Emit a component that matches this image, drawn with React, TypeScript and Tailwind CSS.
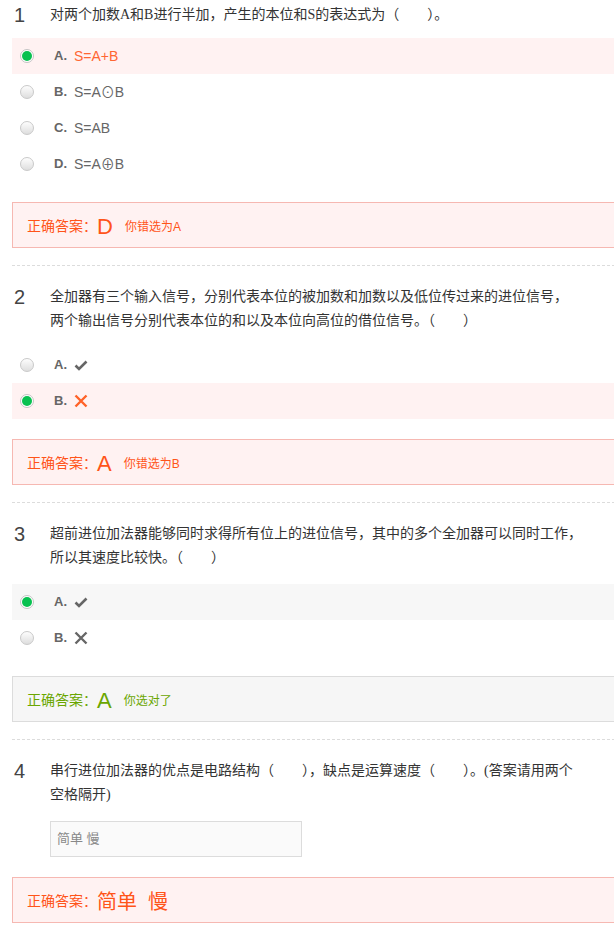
import React from "react";

type Option = {
  key: string;
  text?: string;
  icon?: "check" | "cross";
  selected?: boolean;
};

type Question = {
  no: number;
  lines: string[];
  options?: Option[];
  input?: string;
  answer: string;
  note?: string;
  correct: boolean;
  first?: boolean;
};

const questions: Question[] = [
  {
    no: 1,
    first: true,
    lines: ["对两个加数A和B进行半加，产生的本位和S的表达式为（　　）。"],
    options: [
      { key: "A", text: "S=A+B", selected: true },
      { key: "B", text: "S=A⊙B" },
      { key: "C", text: "S=AB" },
      { key: "D", text: "S=A⊕B" },
    ],
    answer: "D",
    note: "你错选为A",
    correct: false,
  },
  {
    no: 2,
    lines: [
      "全加器有三个输入信号，分别代表本位的被加数和加数以及低位传过来的进位信号，",
      "两个输出信号分别代表本位的和以及本位向高位的借位信号。（　　）",
    ],
    options: [
      { key: "A", icon: "check" },
      { key: "B", icon: "cross", selected: true },
    ],
    answer: "A",
    note: "你错选为B",
    correct: false,
  },
  {
    no: 3,
    lines: [
      "超前进位加法器能够同时求得所有位上的进位信号，其中的多个全加器可以同时工作，",
      "所以其速度比较快。（　　）",
    ],
    options: [
      { key: "A", icon: "check", selected: true },
      { key: "B", icon: "cross" },
    ],
    answer: "A",
    note: "你选对了",
    correct: true,
  },
  {
    no: 4,
    lines: [
      "串行进位加法器的优点是电路结构（　　），缺点是运算速度（　　）。(答案请用两个",
      "空格隔开)",
    ],
    input: "简单 慢",
    answer: "简单  慢",
    correct: false,
  },
];

function Radio({ checked }: { checked?: boolean }) {
  if (checked) {
    return (
      <span className="flex h-[14px] w-[14px] items-center justify-center rounded-full border border-[#c4c4c4] bg-white">
        <span className="h-[10px] w-[10px] rounded-full bg-[#08c150]" />
      </span>
    );
  }
  return (
    <span className="h-[14px] w-[14px] rounded-full border border-[#c9c9c9] bg-gradient-to-b from-[#fdfdfd] to-[#dedede]" />
  );
}

function CheckIcon() {
  return (
    <svg width="14" height="11" viewBox="0 0 14 11" className="text-[#666]">
      <path d="M1.5 5.5 L5 9 L12.5 1.5" fill="none" stroke="currentColor" strokeWidth="2.6" />
    </svg>
  );
}

function CrossIcon({ color }: { color: string }) {
  return (
    <svg width="14" height="14" viewBox="0 0 14 14" style={{ color }}>
      <path d="M1.5 1.5 L12.5 12.5 M12.5 1.5 L1.5 12.5" fill="none" stroke="currentColor" strokeWidth="2.4" />
    </svg>
  );
}

function OptionRow({ opt, correct }: { opt: Option; correct: boolean }) {
  const band = opt.selected ? (correct ? "bg-[#f7f7f7]" : "bg-[#fff2f2]") : "";
  const wrong = opt.selected && !correct;
  return (
    <div className={`flex h-[36px] items-center ${band}`}>
      <span className="ml-[8px] flex w-[34px]">
        <Radio checked={opt.selected} />
      </span>
      <span className="w-[20px] text-[13px] font-bold text-[#666]">{opt.key}.</span>
      {opt.text && (
        <span className={`text-[14px] ${wrong ? "text-[#ff6633]" : "text-[#666]"}`}>{opt.text}</span>
      )}
      {opt.icon === "check" && <CheckIcon />}
      {opt.icon === "cross" && <CrossIcon color={wrong ? "#ff6228" : "#666"} />}
    </div>
  );
}

function AnswerBox({ q }: { q: Question }) {
  const box = q.correct
    ? "border-[#dcdcdc] bg-[#f6f6f6] text-[#6aa600]"
    : "border-[#f6b8b2] bg-[#fff2f2] text-[#ff5419]";
  return (
    <div className={`mt-[20px] flex h-[46px] items-center border px-[14px] pt-[3px] ${box}`}>
      <span className="text-[14px]">正确答案：</span>
      <span className={`whitespace-pre ${q.input ? "text-[20px]" : "text-[22px]"} leading-none`}>{q.answer}</span>
      {q.note && <span className="ml-[12px] text-[12px]">{q.note}</span>}
    </div>
  );
}

function QuestionBlock({ q }: { q: Question }) {
  return (
    <div className={q.first ? "pt-[3px] pb-[17px]" : "border-t border-dashed border-[#dcdcdc] pt-[19px] pb-[17px]"}>
      <div className="flex">
        <div className="w-[38px] pl-[2px] text-[20px] leading-[24px] text-[#444]">{q.no}</div>
        <div className="font-['Liberation_Serif','Noto_Sans_CJK_SC',serif] text-[14px] leading-[24px] whitespace-nowrap text-[#333]">
          {q.lines.map((l, i) => (
            <div key={i}>{l}</div>
          ))}
        </div>
      </div>

      {q.options && (
        <div className={q.first ? "mt-[11px]" : "mt-[14px]"}>
          {q.options.map((o) => (
            <OptionRow key={o.key} opt={o} correct={q.correct} />
          ))}
        </div>
      )}

      {q.input !== undefined && (
        <div className="mt-[14px] ml-[38px] flex h-[36px] w-[252px] items-center border border-[#dcdcdc] bg-[#fafafa] px-[6px] text-[13px] text-[#888]">
          {q.input}
        </div>
      )}

      <AnswerBox q={q} />
    </div>
  );
}

export default function App() {
  return (
    <div className="h-[940px] w-[614px] overflow-hidden bg-white font-['Liberation_Sans','Noto_Sans_CJK_SC',sans-serif]">
      <div className="w-[640px] pl-[12px]">
        {questions.map((q) => (
          <QuestionBlock key={q.no} q={q} />
        ))}
      </div>
    </div>
  );
}
